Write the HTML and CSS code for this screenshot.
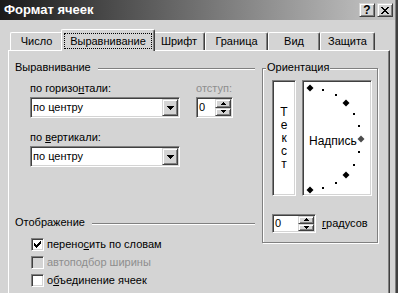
FILE: index.html
```html
<!DOCTYPE html>
<html lang="ru">
<head>
<meta charset="utf-8">
<title>Формат ячеек</title>
<link rel="stylesheet" href="styles.css">
</head>
<body>
<div class="window">
  <div class="titlebar">
    <span class="title">Формат ячеек</span>
    <div class="caption-buttons">
      <span class="cbtn help">?</span>
      <span class="cbtn close"><svg width="8" height="7" viewBox="0 0 8 7" shape-rendering="crispEdges"><path d="M0 0h2v1h-2zM6 0h2v1h-2zM1 1h2v1h-2zM5 1h2v1h-2zM2 2h4v1h-4zM3 3h2v1h-2zM2 4h4v1h-4zM1 5h2v1h-2zM5 5h2v1h-2zM0 6h2v1h-2zM6 6h2v1h-2z"/></svg></span>
    </div>
  </div>
  <div class="client">
    <div class="tabs">
      <div class="tab t-num">Число</div>
      <div class="tab active"><span class="focus">Выравнивание</span></div>
      <div class="tab t-font">Шрифт</div>
      <div class="tab t-border">Граница</div>
      <div class="tab t-view">Вид</div>
      <div class="tab t-prot">Защита</div>
    </div>
    <div class="panel">
      <div class="leftcol">
        <div class="section"><span>Выравнивание</span><i class="etch"></i></div>
        <div class="hrow">
          <div class="field">
            <div class="lbl">по горизо<u>н</u>тали:</div>
            <div class="combo sunken"><span class="val">по центру</span><span class="drop raised"><svg width="7" height="4" viewBox="0 0 7 4" shape-rendering="crispEdges"><path d="M0 0h7v1h-7zM1 1h5v1h-5zM2 2h3v1h-3zM3 3h1v1h-1z"/></svg></span></div>
          </div>
          <div class="field indent">
            <div class="lbl disabled">отступ:</div>
            <div class="spin s-indent sunken"><span class="val">0</span><span class="spinbtns"><span class="sb raised"><svg width="5" height="3" viewBox="0 0 5 3" shape-rendering="crispEdges"><path d="M2 0h1v1h-1zM1 1h3v1h-3zM0 2h5v1h-5z"/></svg></span><span class="sb raised"><svg width="5" height="3" viewBox="0 0 5 3" shape-rendering="crispEdges"><path d="M0 0h5v1h-5zM1 1h3v1h-3zM2 2h1v1h-1z"/></svg></span></span></div>
          </div>
        </div>
        <div class="field vfield">
          <div class="lbl">по <u>в</u>ертикали:</div>
          <div class="combo sunken"><span class="val">по центру</span><span class="drop raised"><svg width="7" height="4" viewBox="0 0 7 4" shape-rendering="crispEdges"><path d="M0 0h7v1h-7zM1 1h5v1h-5zM2 2h3v1h-3zM3 3h1v1h-1z"/></svg></span></div>
        </div>
        <div class="section display"><span>Отображение</span><i class="etch"></i></div>
        <div class="checks">
          <div class="check"><span class="box sunken"><svg width="7" height="7" viewBox="0 0 7 7" shape-rendering="crispEdges"><path d="M6 0h1v1h-1zM5 1h2v1h-2zM0 2h1v1h-1zM4 2h3v1h-3zM0 3h2v1h-2zM3 3h3v1h-3zM0 4h5v1h-5zM1 5h3v1h-3zM2 6h1v1h-1z"/></svg></span><span>перено<u>с</u>ить по словам</span></div>
          <div class="check dis"><span class="box sunken off"></span><span class="disabled">автоподбор ширины</span></div>
          <div class="check"><span class="box sunken"></span><span>о<u>б</u>ъединение ячеек</span></div>
        </div>
      </div>
      <div class="orient">
        <span class="legend">Ориентация</span>
        <div class="orient-row">
          <div class="textbox sunken"><span>Т</span><span>е</span><span>к</span><span>с</span><span>т</span></div>
          <div class="dial sunken">
            <svg class="dial-svg" width="66" height="112" viewBox="0 0 66 112">
              <g fill="#000">
                <polygon points="5,1.5 8.5,5 5,8.5 1.5,5"/>
                <rect x="17" y="6" width="2" height="2"/>
                <rect x="30" y="11" width="2" height="2"/>
                <polygon points="41,16.5 44.5,20 41,23.5 37.5,20"/>
                <rect x="48" y="30" width="2" height="2"/>
                <rect x="53" y="42" width="2" height="2"/>
                <rect x="53" y="68" width="2" height="2"/>
                <rect x="48" y="81" width="2" height="2"/>
                <polygon points="41,88.5 44.5,92 41,95.5 37.5,92"/>
                <rect x="30" y="99" width="2" height="2"/>
                <rect x="17" y="104" width="2" height="2"/>
                <polygon points="5,103.5 8.5,107 5,110.5 1.5,107"/>
              </g>
              <polygon fill="#4c4c4c" points="56,52.5 59.5,56 56,59.5 52.5,56"/>
            </svg>
            <span class="dial-text">Надпись</span>
          </div>
        </div>
        <div class="degrow">
          <div class="spin s-deg sunken"><span class="val">0</span><span class="spinbtns"><span class="sb raised"><svg width="5" height="3" viewBox="0 0 5 3" shape-rendering="crispEdges"><path d="M2 0h1v1h-1zM1 1h3v1h-3zM0 2h5v1h-5z"/></svg></span><span class="sb raised"><svg width="5" height="3" viewBox="0 0 5 3" shape-rendering="crispEdges"><path d="M0 0h5v1h-5zM1 1h3v1h-3zM2 2h1v1h-1z"/></svg></span></span></div>
          <span><u>г</u>радусов</span>
        </div>
      </div>
    </div>
  </div>
</div>
</body>
</html>
```

FILE: styles.css
```css
* { box-sizing: border-box; margin: 0; padding: 0; }
html, body { width: 398px; height: 293px; overflow: hidden; }
body {
  background: #d4d4d4;
  font-family: "Liberation Sans", Arial, sans-serif;
  font-size: 11px;
  line-height: 13px;
  color: #000;
}
u { text-decoration: underline; text-underline-offset: 1px; }

.window {
  width: 398px;
  height: 293px;
  padding-right: 3px;
  box-shadow: inset -2px 0 #404040, inset -3px 0 #808080;
}

.titlebar {
  height: 20px;
  display: flex;
  align-items: center;
  justify-content: space-between;
  padding: 0 2px 0 4px;
  background: linear-gradient(to right, #1a1a1a, #c8c8c8);
}
.title {
  color: #fff;
  font-weight: bold;
  font-size: 13px;
  line-height: 16px;
}
.caption-buttons { display: flex; gap: 2px; }
.cbtn {
  width: 16px;
  height: 14px;
  display: flex;
  align-items: center;
  justify-content: center;
  background: #d4d4d4;
  border: 1px solid;
  border-color: #d4d4d4 #404040 #404040 #d4d4d4;
  box-shadow: inset 1px 1px #fff, inset -1px -1px #808080;
  font-weight: bold;
  font-size: 12px;
  line-height: 12px;
}

.client { padding: 9px 0 0 8px; }

.tabs {
  display: flex;
  align-items: flex-end;
  height: 21px;
  padding-left: 2px;
  position: relative;
  z-index: 1;
}
.tab {
  height: 18px;
  display: flex;
  align-items: center;
  justify-content: center;
  background: #d4d4d4;
  border: 1px solid;
  border-bottom: 0;
  border-color: #fff #404040 #fff #fff;
  box-shadow: inset -1px 0 #808080;
  border-radius: 2px 2px 0 0;
}
.t-num { width: 53px; }
.t-font { width: 52px; }
.t-border { width: 63px; }
.t-view { width: 52px; }
.t-prot { width: 55px; }
.tab.active {
  width: 94px;
  height: 22px;
  margin: 0 -2px -1px;
  padding: 3px 2px 2px 2px;
  align-items: stretch;
  position: relative;
  z-index: 2;
}
.focus {
  flex: 1;
  border: 1px dotted #000;
  display: flex;
  align-items: center;
  justify-content: center;
}

.panel {
  width: 382px;
  height: 243px;
  overflow: hidden;
  border: 1px solid;
  border-bottom: 0;
  border-color: #fff #404040 #404040 #fff;
  box-shadow: inset -1px 0 #808080;
  display: flex;
  align-items: flex-start;
  padding: 9px 0 0 6px;
}

.sunken {
  border: 1px solid;
  border-color: #808080 #fff #fff #808080;
  box-shadow: inset 1px 1px #404040, inset -1px -1px #d4d4d4;
  background: #fff;
}
.raised {
  background: #d4d4d4;
  border: 1px solid;
  border-color: #d4d4d4 #404040 #404040 #d4d4d4;
  box-shadow: inset 1px 1px #fff, inset -1px -1px #808080;
}

.leftcol { width: 240px; display: flex; flex-direction: column; }
.section { display: flex; align-items: center; height: 14px; line-height: 14px; }
.etch {
  flex: 1;
  height: 2px;
  border-top: 1px solid #808080;
  border-bottom: 1px solid #fff;
  margin: 4px 0 0 7px;
}
.hrow { display: flex; margin-top: 7px; }
.field { display: flex; flex-direction: column; margin-left: 15px; }
.indent { margin-left: 16px; }
.vfield { margin-top: 12px; }
.lbl { height: 14px; line-height: 14px; }
.disabled { color: #8e8e8e; }

.combo {
  width: 150px;
  height: 21px;
  margin-top: 2px;
  display: flex;
  padding: 1px;
}
.combo .val {
  flex: 1;
  display: flex;
  align-items: center;
  padding-left: 1px;
}
.drop {
  width: 16px;
  display: flex;
  align-items: center;
  justify-content: center;
}

.spin { display: flex; padding: 1px; margin-top: 2px; }
.spin .val { flex: 1; display: flex; align-items: center; padding-left: 1px; }
.s-indent { width: 37px; height: 21px; }
.s-deg { width: 44px; height: 19px; margin-top: 0; }
.spinbtns { width: 16px; display: flex; flex-direction: column; }
.sb { flex: 1; display: flex; align-items: center; justify-content: center; }

.section.display { margin-top: 48px; }
.checks { margin-top: 6px; padding-left: 16px; display: flex; flex-direction: column; }
.check { height: 18px; display: flex; align-items: center; gap: 3px; }
.box {
  width: 13px;
  height: 13px;
  display: flex;
  align-items: center;
  justify-content: center;
}
.box.off { background: #d4d4d4; }

.orient {
  margin: 8px 0 0 7px;
  width: 116px;
  height: 175px;
  border: 1px solid #808080;
  box-shadow: inset 1px 1px #fff, 1px 1px #fff;
  padding-left: 9px;
  display: flex;
  flex-direction: column;
  align-items: flex-start;
}
.legend {
  margin: -8px 0 0 -6px;
  padding: 0 1px;
  background: #d4d4d4;
  line-height: 13px;
}
.orient-row { display: flex; gap: 6px; margin-top: 6px; }
.textbox {
  width: 24px;
  height: 116px;
  display: flex;
  flex-direction: column;
  align-items: center;
  justify-content: center;
  font-size: 12px;
  line-height: 13px;
}
.dial {
  width: 70px;
  height: 116px;
  padding: 2px;
  display: grid;
}
.dial-svg, .dial-text { grid-area: 1 / 1; }
.dial-text {
  align-self: center;
  justify-self: start;
  margin: 4px 0 0 4px;
  font-size: 12px;
}
.degrow { display: flex; align-items: center; gap: 6px; margin-top: 18px; }
```
